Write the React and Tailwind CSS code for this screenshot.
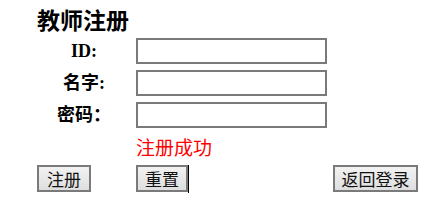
import React from 'react';

const cjk = '"Noto Sans CJK SC", sans-serif';
const label = '"Liberation Serif", "Noto Sans CJK SC", serif';

const fields = [
  { id: 'tid', text: 'ID:' },
  { id: 'name', text: '名字:' },
  { id: 'pwd', text: '密码：' },
];

const Btn = ({ children, className = '' }) => (
  <button
    className={`h-[27px] border-2 border-[#7a7a7a] bg-gradient-to-b from-[#f2f2f2] to-[#dedede] text-[17px] leading-none text-[#111] ${className}`}
    style={{ fontFamily: cjk }}
  >
    {children}
  </button>
);

export default function App() {
  return (
    <div className="w-[431px] h-[201px] bg-white pl-[37px]">
      <div className="h-[38px] flex items-center">
        <h2 className="text-[23px] font-bold leading-none text-black" style={{ fontFamily: cjk }}>
          教师注册
        </h2>
      </div>

      <div className="grid grid-cols-[94px_191px_auto] gap-x-[5px] gap-y-[6px]">
        {fields.map((f) => (
          <React.Fragment key={f.id}>
            <div
              className="h-[26px] flex items-center justify-center text-[18px] font-bold text-black"
              style={{ fontFamily: label }}
            >
              {f.text}
            </div>
            <input
              type={f.id === 'pwd' ? 'password' : 'text'}
              className="h-[26px] w-[191px] border-2 border-[#7a7a7a] bg-white outline-none"
            />
            <div />
          </React.Fragment>
        ))}
      </div>

      <div className="grid grid-cols-[94px_191px_auto] gap-x-[5px] h-[37px] items-center">
        <div />
        <div className="text-[19px] leading-none text-[#ff0000]" style={{ fontFamily: cjk }}>
          注册成功
        </div>
        <div />
      </div>

      <div className="grid grid-cols-[99px_197px_auto] items-start">
        <div>
          <Btn className="w-[54px]">注册</Btn>
        </div>
        <div className="flex items-stretch">
          <Btn className="w-[52px]">重置</Btn>
          <div className="w-px h-[28px] bg-black" />
        </div>
        <div>
          <Btn className="w-[85px]">返回登录</Btn>
        </div>
      </div>
    </div>
  );
}
